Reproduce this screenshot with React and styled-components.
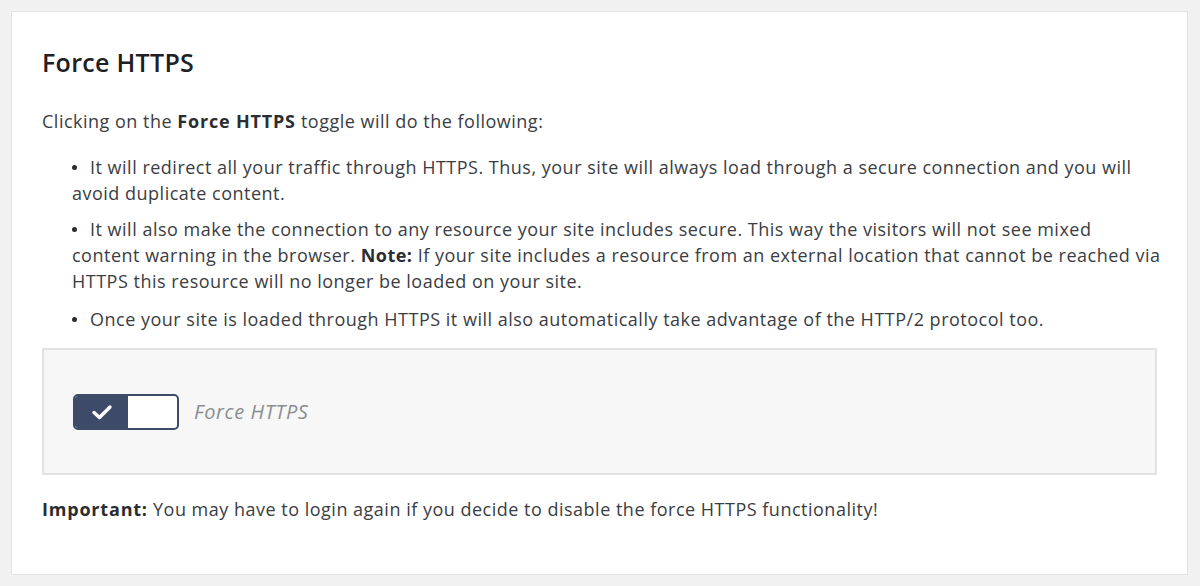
import styled, { createGlobalStyle } from "styled-components";

const Global = createGlobalStyle`
  html, body {
    margin: 0;
    padding: 0;
    background: #f1f1f1;
  }
  body {
    font-family: "Open Sans", "Liberation Sans", sans-serif;
    color: #3c3f44;
  }
`;

const Page = styled.div`
  padding: 11px 12px 11px 11px;
`;

const Card = styled.div`
  background: #fff;
  border: 1px solid #e3e3e3;
  height: 564px;
  box-sizing: border-box;
  padding: 35px 30px 0 30px;
`;

const Title = styled.h2`
  margin: 0 0 31px;
  font-size: 25px;
  font-weight: 600;
  letter-spacing: 0.3px;
  line-height: 30px;
  color: #1d2024;
`;

const Text = styled.p`
  margin: 0 0 ${(p) => p.$gap || 0}px;
  font-size: 18px;
  letter-spacing: 0.5px;
  line-height: 26px;
  color: #3a3d42;

  strong {
    font-weight: 700;
    letter-spacing: 0.8px;
    color: #2a2d31;
  }
`;

const List = styled.ul`
  margin: 0 -8px 16px 0;
  padding: 0 0 0 30px;
  list-style: none;
`;

const Item = styled.li`
  position: relative;
  font-size: 18px;
  letter-spacing: 0.5px;
  line-height: 26px;
  margin-bottom: 10px;
  text-indent: 18px;
  color: #3a3d42;

  &::before {
    content: "";
    position: absolute;
    left: 0;
    top: 11px;
    width: 5px;
    height: 5px;
    border-radius: 50%;
    background: #2a2d31;
  }

  strong {
    font-weight: 700;
    color: #2a2d31;
  }

  &:last-child {
    margin-bottom: 0;
    margin-top: 12px;
  }
`;

const NoWrap = styled.span`
  white-space: nowrap;
`;

const Panel = styled.div`
  background: #f7f7f7;
  border: 2px solid #e2e2e2;
  height: 127px;
  box-sizing: border-box;
  display: flex;
  align-items: center;
  gap: 15px;
  padding: 0 0 0 29px;
  margin-bottom: 21px;
`;

const Toggle = styled.div`
  display: flex;
  width: 106px;
  height: 36px;
  box-sizing: border-box;
  border: 2px solid #3d4a68;
  border-radius: 5px;
  overflow: hidden;
  background: #fff;
`;

const Knob = styled.div`
  width: 53px;
  background: ${(p) => (p.$on ? "#3d4a68" : "transparent")};
  display: flex;
  align-items: center;
  justify-content: center;
`;

const Label = styled.span`
  font-size: 20px;
  font-style: italic;
  letter-spacing: 0.6px;
  color: #8a8d91;
`;

const Check = () => (
  <svg width="22" height="16" viewBox="0 0 22 16">
    <path
      d="M3 8.5 L8.5 13.5 L19 3"
      fill="none"
      stroke="#fff"
      strokeWidth="3.4"
      strokeLinecap="round"
      strokeLinejoin="round"
    />
  </svg>
);

export default function App() {
  return (
    <Page>
      <Global />
      <Card>
        <Title>Force HTTPS</Title>
        <Text $gap={20}>
          Clicking on the <strong>Force HTTPS</strong> toggle will do the following:
        </Text>
        <List>
          <Item>
            It will redirect all your traffic through HTTPS. Thus, your site will always load
            through a secure connection and you will avoid duplicate content.
          </Item>
          <Item>
            It will also make the connection to any resource your site includes secure. This way
            the visitors will not see mixed <NoWrap>content warning</NoWrap> in the browser.{" "}
            <strong>Note:</strong> If your site includes a resource from an external location that
            cannot be reached via HTTPS this resource will no longer be loaded on your site.
          </Item>
          <Item>
            Once your site is loaded through HTTPS it will also automatically take advantage of the
            HTTP/2 protocol too.
          </Item>
        </List>
        <Panel>
          <Toggle>
            <Knob $on>
              <Check />
            </Knob>
          </Toggle>
          <Label>Force HTTPS</Label>
        </Panel>
        <Text>
          <strong>Important:</strong> You may have to login again if you decide to disable the
          force HTTPS functionality!
        </Text>
      </Card>
    </Page>
  );
}
